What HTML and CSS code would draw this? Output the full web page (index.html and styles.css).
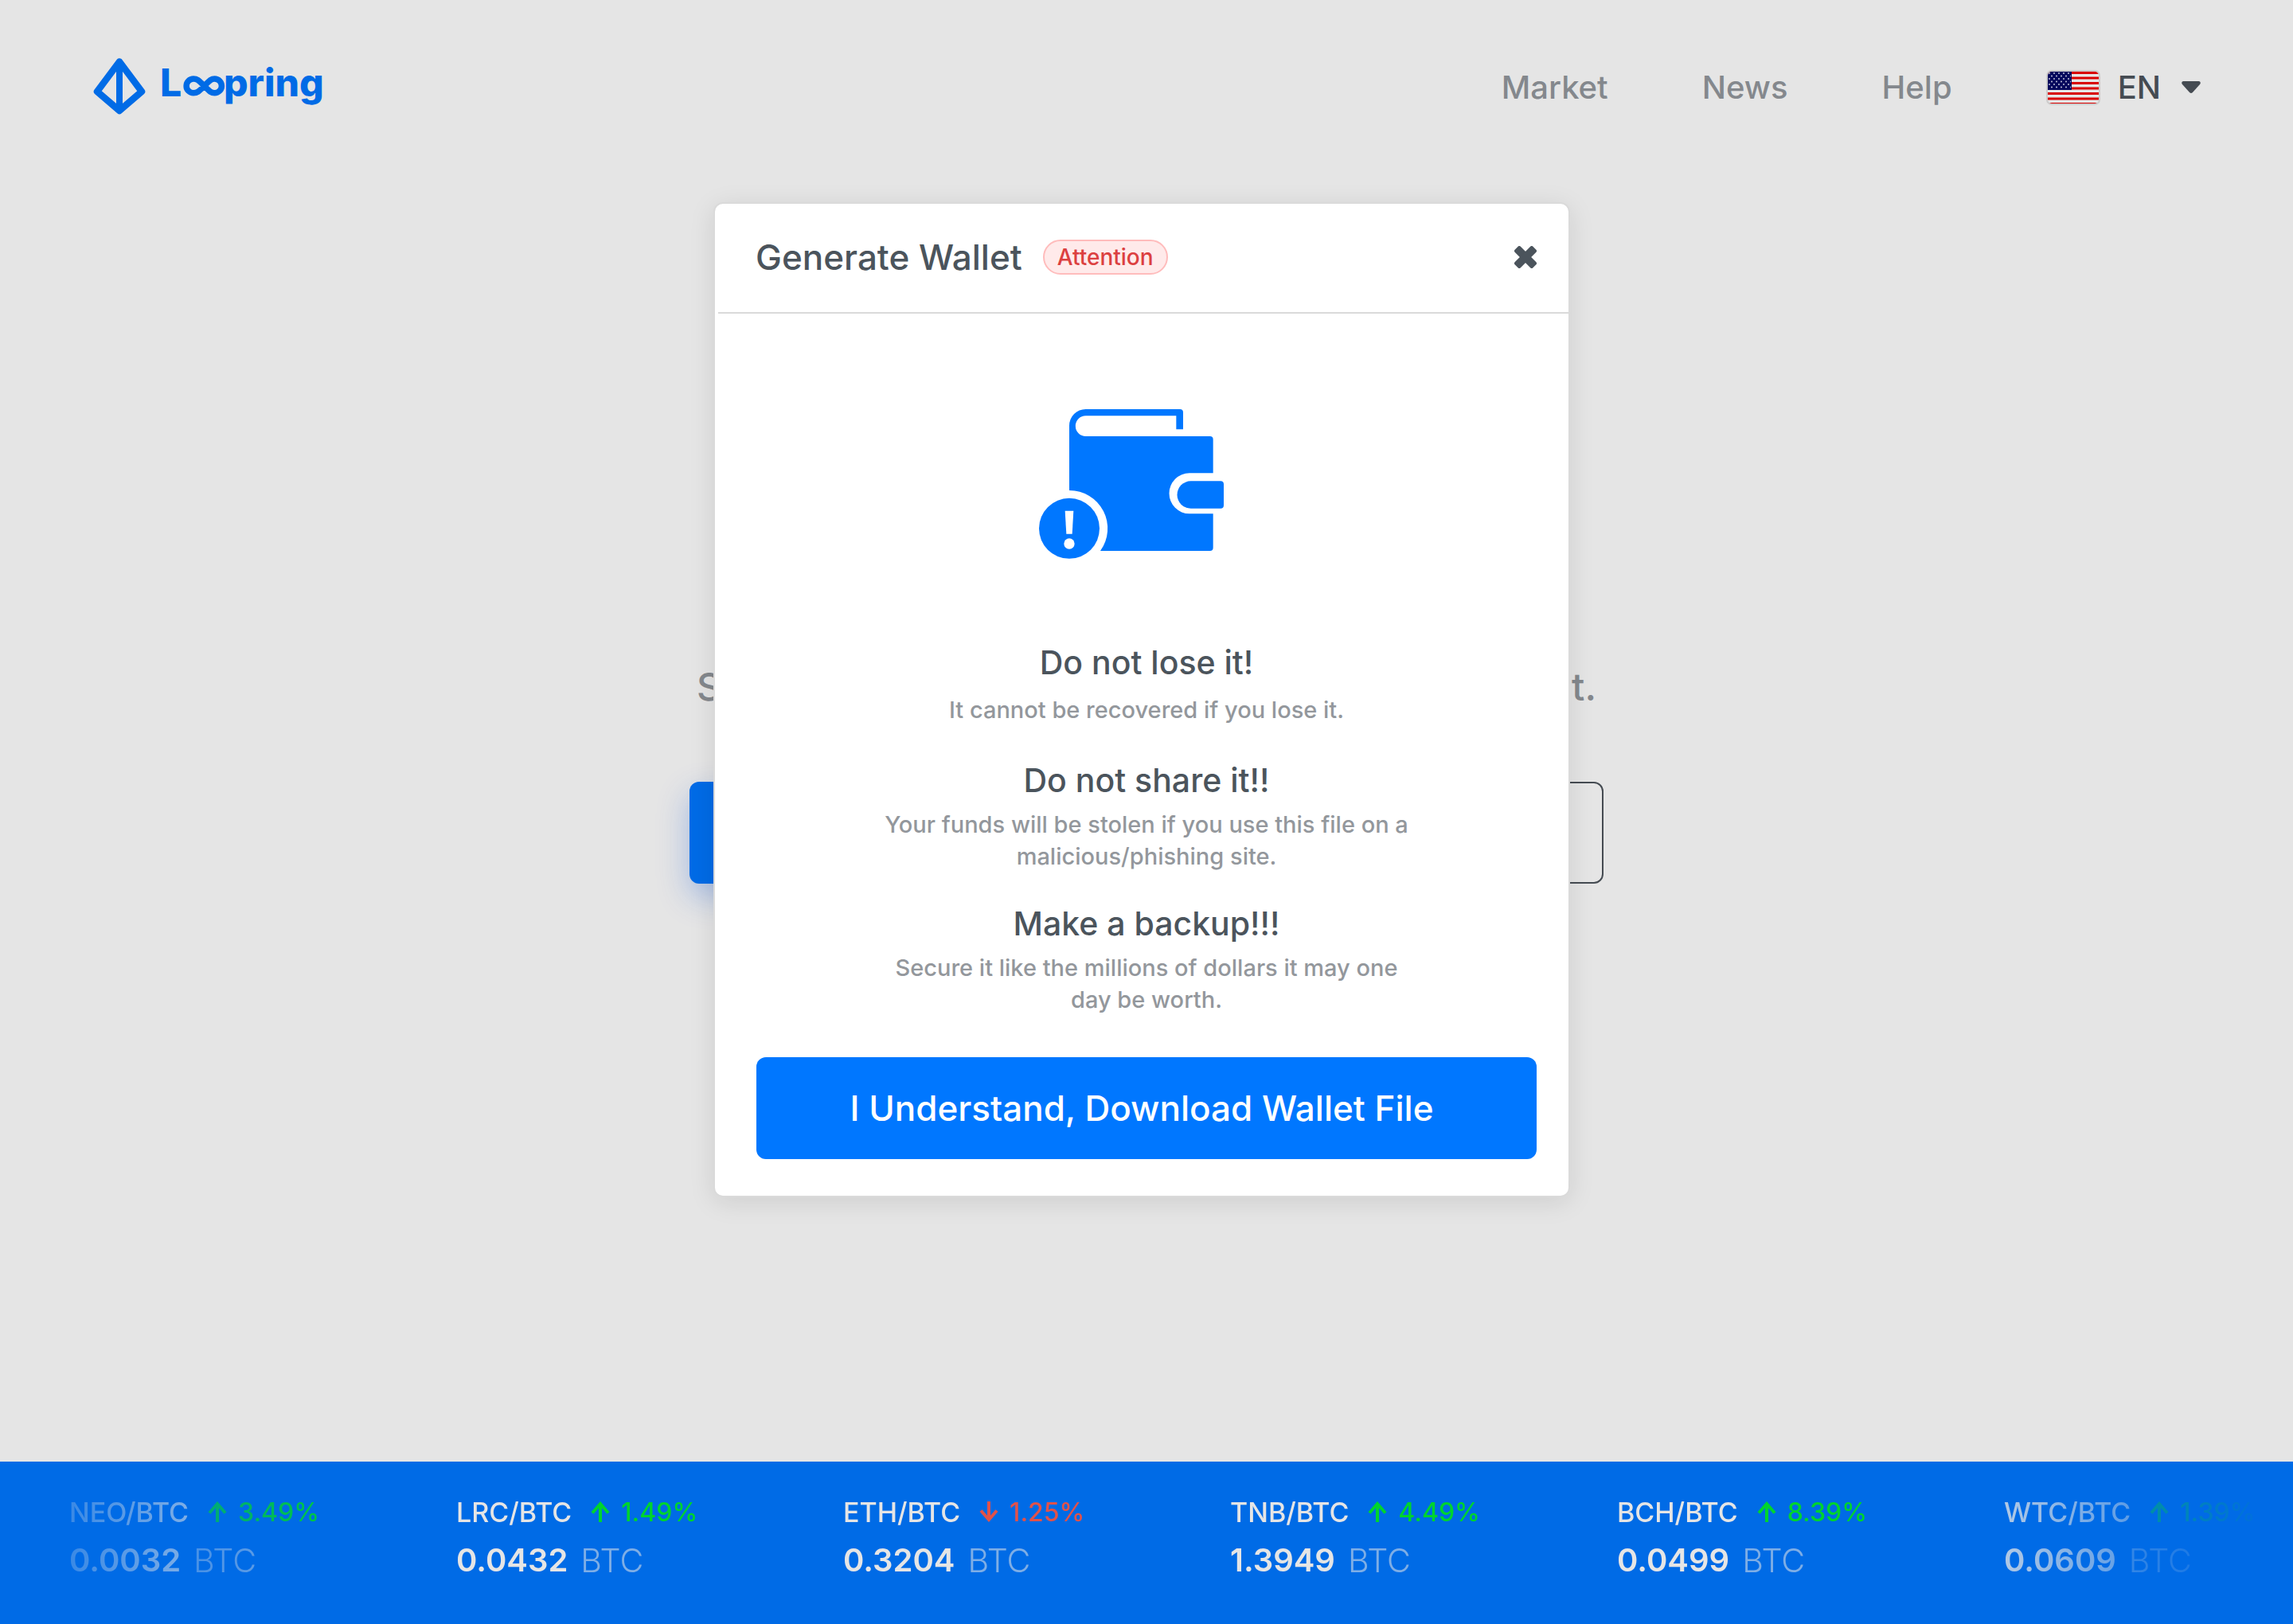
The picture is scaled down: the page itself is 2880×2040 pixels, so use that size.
FILE: index.html
```html
<!DOCTYPE html>
<html lang="en">
<head>
<meta charset="utf-8">
<meta name="viewport" content="width=device-width, initial-scale=1">
<title>Loopring Wallet</title>
<link rel="stylesheet" href="styles.css">
</head>
<body>
<svg class="sprite" aria-hidden="true">
  <symbol id="arrow-up" viewBox="0 0 24 26">
    <path d="M12 26V3M2 14.5L12 3l10 11.500" fill="none" stroke="currentColor" stroke-width="4"/>
  </symbol>
  <symbol id="arrow-down" viewBox="0 0 24 26">
    <path d="M12 0v23M2 11.500L12 23l10-11.500" fill="none" stroke="currentColor" stroke-width="4"/>
  </symbol>
</svg>

<div class="page">
  <header class="topbar">
    <a class="brand" href="#" aria-label="Loopring">
      <svg class="brand-logo" viewBox="116 72 292 76" aria-hidden="true">
        <g fill="none" stroke="currentColor" stroke-linejoin="round">
          <path stroke-width="8.500" d="M150 77.500L178 115L150 139L122 115Z"/>
          <path stroke-width="8" d="M150 78V138"/>
          <path stroke-width="7.500" d="M256.500 108C250 101.500 248 99 243 99A8.900 8.900 0 0 0 243 116.800C248 116.800 250 114.500 256.500 108C263 101.500 265 99 269.500 99A8.900 8.900 0 0 1 269.500 116.800C265 116.800 263 114.500 256.500 108Z"/>
        </g>
        <text class="brand-name" x="201" y="121">L</text>
        <text class="brand-name" x="281" y="121">pring</text>
      </svg>
    </a>
    <nav class="nav">
      <a href="#">Market</a>
      <a href="#">News</a>
      <a href="#">Help</a>
      <button class="lang" type="button">
        <svg class="flag" viewBox="0 0 68 44" aria-hidden="true">
          <defs>
            <pattern id="stars" width="6" height="7" patternUnits="userSpaceOnUse" x="2" y="2">
              <circle cx="2" cy="2" r="0.900" fill="#d4d6e6"/>
              <circle cx="5" cy="5.500" r="0.900" fill="#d4d6e6"/>
            </pattern>
            <clipPath id="flag-clip"><rect x="2" y="2" width="64" height="40" rx="5"/></clipPath>
          </defs>
          <rect width="68" height="44" rx="7" fill="#cccccc"/>
          <g clip-path="url(#flag-clip)">
            <rect x="2" y="2" width="64" height="40" fill="#e6e6e6"/>
            <path stroke="#d90000" stroke-width="3.200" d="M2 3.500H66M2 10H66M2 16.500H66M2 23H66M2 29.500H66M2 36H66M2 42.500H66"/>
            <rect x="2" y="2" width="30" height="23" fill="#05085c"/>
            <rect x="3" y="3" width="28" height="21" fill="url(#stars)"/>
          </g>
        </svg>
        <span>EN</span>
        <svg class="caret" viewBox="0 0 24 16" aria-hidden="true">
          <path fill="currentColor" d="M2 0H22Q25 1 23 4L14 14Q12 16 10 14L1 4Q-1 1 2 0Z"/>
        </svg>
      </button>
    </nav>
  </header>

  <main class="hero">
    <p class="hero-text"><span>S</span><span>t.</span></p>
    <div class="hero-actions">
      <button class="btn btn-solid" type="button" aria-label="Generate"></button>
      <button class="btn btn-outline" type="button" aria-label="Unlock"></button>
    </div>
  </main>

  <footer class="ticker">
    <ul class="ticker-list">
      <li class="quote">
        <div class="quote-head"><span class="pair">NEO/BTC</span><span class="change up"><svg class="arrow"><use href="#arrow-up"/></svg>3.49%</span></div>
        <div class="quote-price"><span class="price">0.0032</span><span class="unit">BTC</span></div>
      </li>
      <li class="quote">
        <div class="quote-head"><span class="pair">LRC/BTC</span><span class="change up"><svg class="arrow"><use href="#arrow-up"/></svg>1.49%</span></div>
        <div class="quote-price"><span class="price">0.0432</span><span class="unit">BTC</span></div>
      </li>
      <li class="quote">
        <div class="quote-head"><span class="pair">ETH/BTC</span><span class="change down"><svg class="arrow"><use href="#arrow-down"/></svg>1.25%</span></div>
        <div class="quote-price"><span class="price">0.3204</span><span class="unit">BTC</span></div>
      </li>
      <li class="quote">
        <div class="quote-head"><span class="pair">TNB/BTC</span><span class="change up"><svg class="arrow"><use href="#arrow-up"/></svg>4.49%</span></div>
        <div class="quote-price"><span class="price">1.3949</span><span class="unit">BTC</span></div>
      </li>
      <li class="quote">
        <div class="quote-head"><span class="pair">BCH/BTC</span><span class="change up"><svg class="arrow"><use href="#arrow-up"/></svg>8.39%</span></div>
        <div class="quote-price"><span class="price">0.0499</span><span class="unit">BTC</span></div>
      </li>
      <li class="quote">
        <div class="quote-head"><span class="pair">WTC/BTC</span><span class="change up"><svg class="arrow"><use href="#arrow-up"/></svg>1.39%</span></div>
        <div class="quote-price"><span class="price">0.0609</span><span class="unit">BTC</span></div>
      </li>
    </ul>
  </footer>
</div>

<div class="overlay">
  <section class="modal" role="dialog" aria-labelledby="modal-title">
    <header class="modal-head">
      <h1 class="modal-title" id="modal-title">Generate Wallet</h1>
      <span class="badge">Attention</span>
      <button class="close" type="button" aria-label="Close">
        <svg viewBox="0 0 28 28" aria-hidden="true">
          <g fill="currentColor">
            <rect x="-2" y="9" width="32" height="10" rx="2" transform="rotate(45 14 14)"/>
            <rect x="-2" y="9" width="32" height="10" rx="2" transform="rotate(-45 14 14)"/>
          </g>
        </svg>
      </button>
    </header>
    <div class="modal-body">
      <svg class="wallet" viewBox="78 72 810 564" aria-hidden="true">
        <g fill="currentColor">
          <path d="M254 72H609Q621 72 621 84V148H595V97H254A38 38 0 0 0 254 174H722Q734 174 734 186V313H645A76.500 76.500 0 0 0 645 466H734V594Q734 606 722 606H309A143.500 143.500 0 0 0 192 378V134A62 62 0 0 1 254 72Z"/>
          <path d="M650 343H762Q774 343 774 355V434Q774 446 762 446H650A51.500 51.500 0 0 1 650 343Z"/>
          <circle cx="192" cy="521.500" r="114"/>
        </g>
        <path fill="#fff" d="M176 455H208L203 542H181Z"/>
        <circle cx="192" cy="579" r="20" fill="#fff"/>
      </svg>
      <div class="notice notice-lead">
        <h2>Do not lose it!</h2>
        <p>It cannot be recovered if you lose it.</p>
      </div>
      <div class="notice">
        <h2>Do not share it!!</h2>
        <p>Your funds will be stolen if you use this file on a malicious/phishing site.</p>
      </div>
      <div class="notice">
        <h2>Make a backup!!!</h2>
        <p>Secure it like the millions of dollars it may one day be worth.</p>
      </div>
      <button class="btn btn-primary" type="button">I Understand, Download Wallet File</button>
    </div>
  </section>
</div>
</body>
</html>
```
FILE: styles.css
```css
:root {
  --ink: #4b545c;
  --muted: #93979c;
  --blue: #0077ff;
  --blue-dim: #006be6;
}

* { box-sizing: border-box; }

body {
  margin: 0;
  background: #e5e5e5;
  color: var(--ink);
  font-family: Inter, "Liberation Sans", sans-serif;
  font-weight: 500;
}

h1, h2, p, ul { margin: 0; padding: 0; font-weight: 500; }
ul { list-style: none; }
a { color: inherit; text-decoration: none; }
button { padding: 0; border: 0; background: none; color: inherit; font: inherit; cursor: pointer; }
svg { display: block; }

.sprite { position: absolute; width: 0; height: 0; }

.page {
  display: flex;
  flex-direction: column;
  min-height: 100vh;
}

/* Top bar */
.topbar {
  display: flex;
  align-items: center;
  justify-content: space-between;
  height: 220px;
  padding: 0 116px;
}
.brand { color: var(--blue-dim); }
.brand-logo { width: 292px; height: 76px; }
.brand-name { font-size: 48px; font-weight: 800; fill: currentColor; }
.nav {
  display: flex;
  align-items: center;
  gap: 118px;
  color: #84888d;
  font-size: 40px;
  line-height: 48px;
}
.lang { display: flex; align-items: center; color: #454b52; }
.flag { width: 68px; height: 44px; margin-right: 22px; }
.caret { width: 24px; height: 16px; margin-left: 26px; }

/* Hero */
.hero {
  display: flex;
  flex-direction: column;
  align-items: center;
  gap: 87px;
  padding-top: 611px;
}
.hero-text {
  display: flex;
  justify-content: space-between;
  width: 1130px;
  color: #84888d;
  font-size: 48px;
  line-height: 64px;
}
.hero-actions {
  display: grid;
  grid-template-columns: 1fr 1fr;
  gap: 40px;
  width: 1148px;
}
.btn {
  height: 128px;
  border-radius: 12px;
  font-size: 44px;
  line-height: 56px;
}
.btn-solid {
  background: var(--blue-dim);
  box-shadow: 0 16px 40px rgba(0, 80, 220, 0.3);
}
.btn-outline { border: 2px solid #454b52; }
.btn-primary {
  width: 100%;
  margin-top: 12px;
  padding-right: 12px;
  background: var(--blue);
  color: #fff;
}

/* Price ticker */
.ticker {
  margin-top: auto;
  overflow: hidden;
  background: var(--blue-dim);
  color: #e5e5e5;
}
.ticker-list {
  display: grid;
  grid-auto-flow: column;
  grid-auto-columns: 486px;
  padding: 44px 0 56px 87px;
  -webkit-mask-image: linear-gradient(to right, rgba(0, 0, 0, 0.08) 0, #000 16%, #000 84%, transparent 99%);
  mask-image: linear-gradient(to right, rgba(0, 0, 0, 0.08) 0, #000 16%, #000 84%, transparent 99%);
}
.quote { display: flex; flex-direction: column; gap: 16px; white-space: nowrap; }
.quote-head { display: flex; gap: 24px; font-size: 32px; line-height: 40px; }
.pair { font-size: 34px; }
.change { display: flex; gap: 14px; }
.arrow { width: 24px; height: 26px; margin-top: 6px; }
.up { color: #00d42e; }
.down { color: #e0524a; }
.quote-price { display: flex; gap: 16px; font-size: 40px; line-height: 48px; }
.price { font-weight: 600; }
.unit { font-size: 41px; font-weight: 300; opacity: 0.55; }

/* Modal */
.overlay {
  position: absolute;
  inset: 0;
  display: flex;
  justify-content: center;
  align-items: flex-start;
  padding: 254px 12px 0 0;
}
.modal {
  width: 1076px;
  border: 2px solid #dadada;
  border-radius: 12px;
  background: #fff;
  box-shadow: 0 6px 32px rgba(0, 0, 0, 0.1);
}
.modal-head {
  display: flex;
  align-items: center;
  gap: 26px;
  height: 138px;
  margin-left: 4px;
  padding: 0 40px 2px 47px;
  border-bottom: 2px solid #dadada;
}
.modal-title { font-size: 44px; line-height: 56px; }
.badge {
  padding: 0 16px;
  border: 2px solid #ffbcbc;
  border-radius: 22px;
  background: #ffeaea;
  color: #dc4040;
  font-size: 28px;
  line-height: 40px;
}
.close { margin-left: auto; }
.close svg { width: 28px; height: 28px; }
.modal-body {
  display: flex;
  flex-direction: column;
  align-items: center;
  gap: 40px;
  padding: 120px 40px 46px 52px;
  text-align: center;
}
.wallet { width: 270px; height: 188px; margin-bottom: 66px; color: var(--blue); }
.notice { display: flex; flex-direction: column; gap: 12px; width: 680px; }
.notice-lead { gap: 16px; margin-bottom: 4px; }
.notice h2 { font-size: 41px; line-height: 48px; }
.notice p { color: var(--muted); font-size: 29px; line-height: 40px; }
```
